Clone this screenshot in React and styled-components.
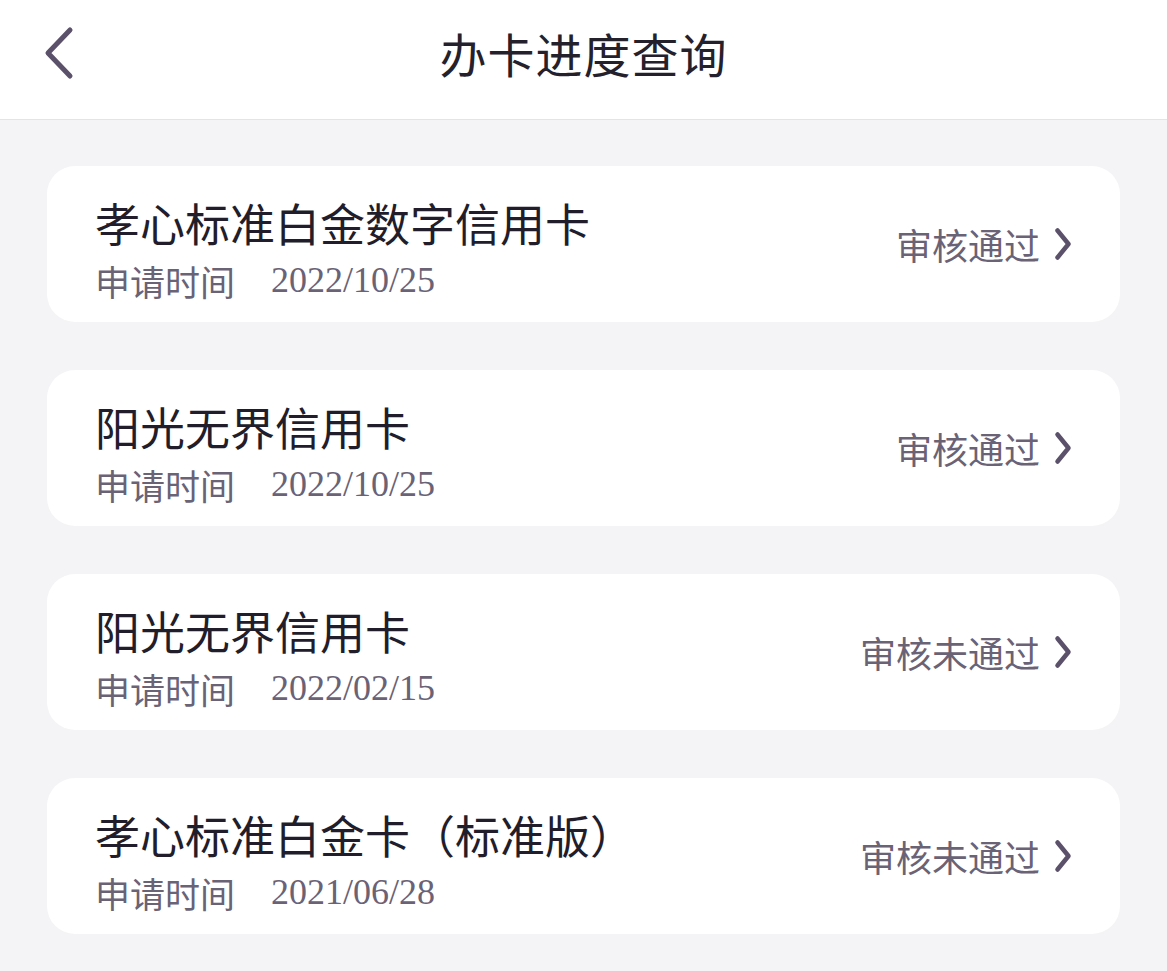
import React from 'react'
import styled, { createGlobalStyle } from 'styled-components'

const GlobalStyle = createGlobalStyle`
  body {
    margin: 0;
    background: #f4f4f7;
    font-family: "Noto Sans CJK SC", "Noto Sans", sans-serif;
  }
`

const records = [
  { name: '孝心标准白金数字信用卡', date: '2022/10/25', status: '审核通过' },
  { name: '阳光无界信用卡', date: '2022/10/25', status: '审核通过' },
  { name: '阳光无界信用卡', date: '2022/02/15', status: '审核未通过' },
  { name: '孝心标准白金卡（标准版）', date: '2021/06/28', status: '审核未通过' },
]

const Page = () => {
  return (
    <Wrapper>
      <GlobalStyle />
      <Header>
        <BackButton aria-label="back">
          <svg width="34" height="58" viewBox="0 0 34 58" fill="none">
            <path d="M28 4 L6 27 L28 50" stroke="#5b516a" strokeWidth="5" strokeLinecap="round" strokeLinejoin="round" />
          </svg>
        </BackButton>
        <Title>办卡进度查询</Title>
      </Header>
      <List>
        {records.map((r, i) => (
          <Card key={i}>
            <Info>
              <CardName>{r.name}</CardName>
              <Meta>
                <MetaLabel>申请时间</MetaLabel>
                <MetaDate>{r.date}</MetaDate>
              </Meta>
            </Info>
            <Status>
              {r.status}
              <svg width="18" height="34" viewBox="0 0 18 34" fill="none">
                <path d="M3.5 3.5 L14.5 17 L3.5 30.5" stroke="#5b516a" strokeWidth="4.5" strokeLinecap="round" strokeLinejoin="round" />
              </svg>
            </Status>
          </Card>
        ))}
      </List>
    </Wrapper>
  )
}

const Wrapper = styled.div`
  min-height: 971px;
  background: #f4f4f7;
`

const Header = styled.header`
  position: relative;
  height: 120px;
  background: #ffffff;
  border-bottom: 1px solid #e4e4e8;
  display: flex;
  align-items: center;
  justify-content: center;
  padding-bottom: 14px;
  box-sizing: border-box;
`

const BackButton = styled.button`
  position: absolute;
  left: 42px;
  top: 26px;
  padding: 0;
  border: 0;
  background: none;
  display: flex;
`

const Title = styled.h1`
  margin: 0;
  font-size: 47px;
  font-weight: 400;
  color: #25212c;
  letter-spacing: 1px;
`

const List = styled.main`
  display: flex;
  flex-direction: column;
  gap: 48px;
  padding: 46px 47px 30px;
`

const Card = styled.section`
  background: #ffffff;
  border-radius: 28px;
  height: 156px;
  box-sizing: border-box;
  padding: 32px 48px 20px;
  display: flex;
  justify-content: space-between;
  align-items: center;
`

const Info = styled.div`
  display: flex;
  flex-direction: column;
  align-self: flex-start;
`

const CardName = styled.div`
  font-size: 45px;
  line-height: 50px;
  color: #221d2b;
`

const Meta = styled.div`
  margin-top: 10px;
  display: flex;
  align-items: center;
  gap: 36px;
  height: 44px;
  color: #6a6275;
`

const MetaLabel = styled.span`
  font-size: 35px;
`

const MetaDate = styled.span`
  font-family: "Liberation Serif", serif;
  font-size: 36px;
`

const Status = styled.div`
  display: flex;
  align-items: center;
  gap: 14px;
  font-size: 36px;
  color: #6a6275;
  margin-top: -12px;
`

export default Page
